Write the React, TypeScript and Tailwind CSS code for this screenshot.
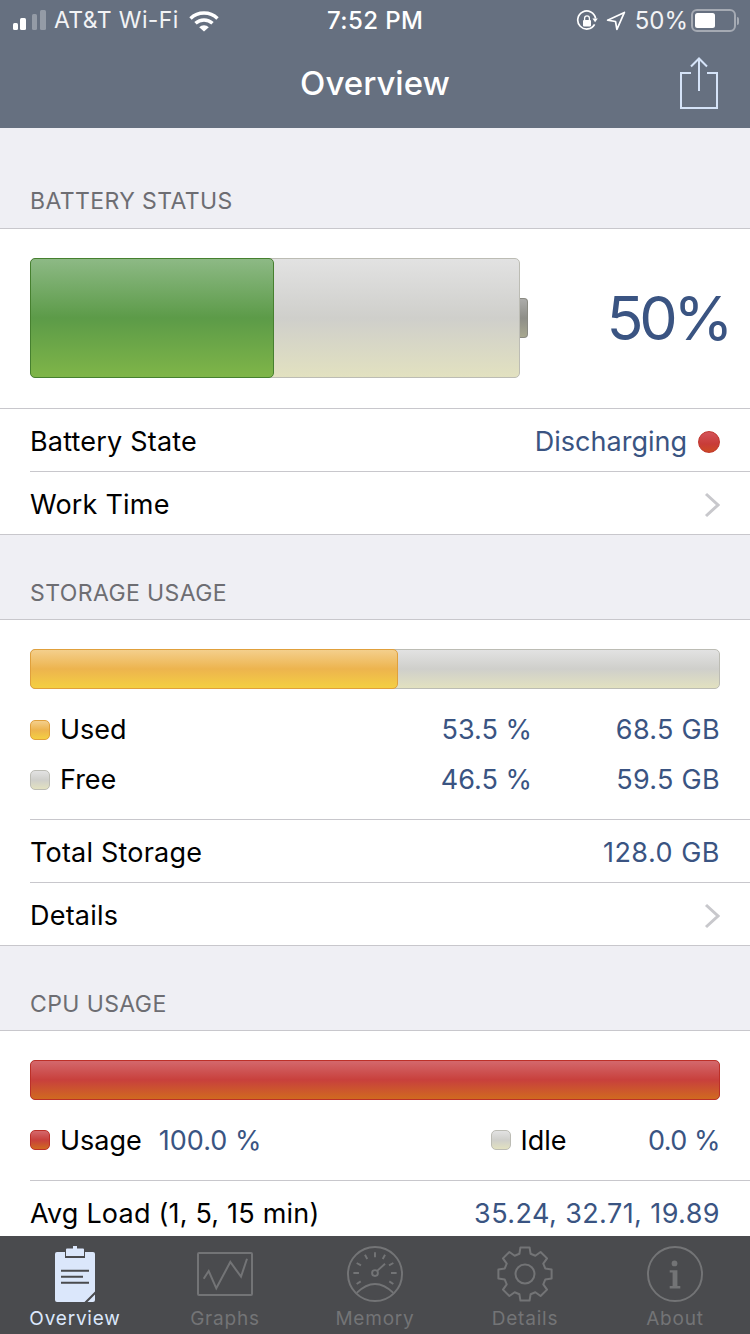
import React from "react";

const F = "font-['Inter','Liberation_Sans',sans-serif]";
const GREY = "bg-[linear-gradient(#e2e2e2_0%,#cfcfcb_50%,#e2e1c0_100%)] border border-[#bcbcb4]";
const ORANGE = "bg-[linear-gradient(#f4cf8c_0%,#edb44e_50%,#f4cf42_100%)] border border-[#e0a03c]";
const RED = "bg-[linear-gradient(#d4686c_0%,#c8403c_50%,#d06a20_100%)] border border-[#bc3028]";
const VAL = "text-[#3a5482]";

function Signal() {
  return (
    <svg width="34" height="24" viewBox="0 0 34 24" className="shrink-0">
      <rect x="0" y="14" width="5" height="7" rx="1.5" fill="#fff" />
      <rect x="7" y="9" width="6" height="12" rx="1.5" fill="#fff" />
      <rect x="19" y="5" width="5" height="16" rx="1.5" fill="#fff" fillOpacity="0.3" />
      <rect x="27" y="1" width="6" height="20" rx="1.5" fill="#fff" fillOpacity="0.3" />
    </svg>
  );
}

function Wifi() {
  return (
    <svg width="30" height="22" viewBox="0 0 30 22">
      <path d="M1.5 8.500a19.5 19.5 0 0 1 27 0" fill="none" stroke="#fff" strokeWidth="3.4" />
      <path d="M6.500 13.300a12.4 12.4 0 0 1 17 0" fill="none" stroke="#fff" strokeWidth="3.4" />
      <path d="M10.200 17.200a6.600 6.600 0 0 1 9.600 0L15 21.500z" fill="#fff" />
    </svg>
  );
}

function RotationLock() {
  return (
    <svg width="22" height="22" viewBox="0 0 22 22">
      <path d="M18.600 14.400A9 9 0 1 1 19.600 8.500" fill="none" stroke="#fff" strokeWidth="1.7" />
      <path d="M16.400 8.600h5.400l-2.700 3.600z" fill="#fff" />
      <rect x="7" y="10" width="8" height="6.400" rx="1" fill="#fff" />
      <path d="M8.600 10V8.200a2.400 2.400 0 0 1 4.800 0V10" fill="none" stroke="#fff" strokeWidth="1.3" />
    </svg>
  );
}

function Location() {
  return (
    <svg width="20" height="20" viewBox="0 0 20 20">
      <path d="M18.400 1.400 1.600 9.200l7.900 1.300 1.400 7.900z" fill="none" stroke="#fff" strokeWidth="1.7" strokeLinejoin="round" />
    </svg>
  );
}

function StatusBattery() {
  return (
    <div className="flex items-center">
      <div className="w-[45px] h-[23px] rounded-[6px] border-2 border-[#a5aab3] p-[2px]">
        <div className="w-[20px] h-full rounded-[2.5px] bg-white" />
      </div>
      <div className="ml-[1px] w-[2px] h-[8px] rounded-r bg-[#a5aab3]" />
    </div>
  );
}

function ShareIcon() {
  return (
    <svg width="40" height="54" viewBox="0 0 40 54" fill="none" stroke="#d5e3f8" strokeWidth="2">
      <path d="M12 16H2v35h36V16H28" />
      <path d="M20 2v32M12 9.500l8-8 8 8" />
    </svg>
  );
}

function Chevron() {
  return (
    <svg width="16" height="26" viewBox="0 0 16 26" fill="none" stroke="#c8c8cc" strokeWidth="3">
      <path d="M2 2 14 13 2 24" />
    </svg>
  );
}

function SectionHeader({ title, tall }: { title: string; tall?: boolean }) {
  return (
    <div className={`bg-[#efeff4] border-b border-[#c8c7cc] flex items-end pl-[30px] text-[#6d6d72] text-[23px] leading-[28px] tracking-[0.4px] ${tall ? "h-[101px] pb-[13px]" : "h-[85px] pb-[12px]"}`}>
      {title}
    </div>
  );
}

function Row({ label, children, last }: { label: string; children?: React.ReactNode; last?: boolean }) {
  return (
    <div className={`ml-[30px] pr-[30px] pt-[4px] flex items-center justify-between text-[27px] text-black ${last ? "h-[62px]" : "h-[63px] border-b border-[#c8c7cc]"}`}>
      <span className="tracking-[0.2px]">{label}</span>
      {children}
    </div>
  );
}

function Bar({ fill, width }: { fill: string; width: string }) {
  return (
    <div className={`relative mx-[30px] h-[40px] rounded-[5px] ${GREY}`}>
      <div className={`absolute -left-px -top-px -bottom-px rounded-[5px] ${fill} ${width}`} />
    </div>
  );
}

function Swatch({ cls }: { cls: string }) {
  return <div className={`w-[20px] h-[20px] rounded-[5px] shrink-0 ${cls}`} />;
}

function ClipboardIcon() {
  return (
    <svg width="40" height="56" viewBox="0 0 40 56">
      <path d="M2 6h8v6h20V6h8a2 2 0 0 1 2 2v37.500L29.500 56H2a2 2 0 0 1-2-2V8a2 2 0 0 1 2-2z" fill="#dbe7fb" />
      <path d="M32.500 56 40 48.500V54a2 2 0 0 1-2 2z" fill="#dbe7fb" />
      <path d="M12 2.500h6V0h4v2.500h6a1 1 0 0 1 1 1V10H11V3.500a1 1 0 0 1 1-1z" fill="#dbe7fb" />
      <path d="M6 24.700h28M6 30.700h22M6 36.700h28" stroke="#4a4b4e" strokeWidth="2" />
    </svg>
  );
}

function GraphIcon() {
  return (
    <svg width="56" height="44" viewBox="0 0 56 44" fill="none" stroke="#737476" strokeWidth="2">
      <rect x="1" y="1" width="54" height="42" rx="1" />
      <path d="M6.700 26.700 11.700 19l7.600 17.300L33.300 10 44 24.700 50 6.700" />
    </svg>
  );
}

function GaugeIcon() {
  return (
    <svg width="56" height="56" viewBox="0 0 58 58" fill="none" stroke="#737476" strokeWidth="2">
      <circle cx="29" cy="29" r="28" />
      <path d="M10 48.500Q29 30 48 48.500" />
      <circle cx="29" cy="28" r="3" />
      <path d="M31 26 39.400 18.300M29 6.600v5.100M18.600 9 21 13.500M10 17.600l4.500 2.400M6.600 28h5.800M10 39.400l4.200-2.800M39.400 9 37 13.500M48 17.600 43.500 20M51.400 28h-5.800M48 39.400l-4.200-2.800" />
    </svg>
  );
}

function gearPath() {
  const pts: string[] = [];
  for (let i = 0; i < 8; i++) {
    const a = (i * Math.PI) / 4 - Math.PI / 2;
    [[21, -0.27], [27, -0.17], [27, 0.17], [21, 0.27]].forEach(([r, d]) => {
      pts.push(`${(28 + r * Math.cos(a + d)).toFixed(2)} ${(28 + r * Math.sin(a + d)).toFixed(2)}`);
    });
  }
  return `M${pts.join("L")}Z`;
}

function GearIcon() {
  return (
    <svg width="56" height="56" viewBox="0 0 56 56" fill="none" stroke="#737476" strokeWidth="2" strokeLinejoin="round">
      <circle cx="28" cy="28" r="9.500" />
      <path d={gearPath()} />
    </svg>
  );
}

function InfoIcon() {
  return (
    <svg width="56" height="56" viewBox="0 0 58 58">
      <circle cx="29" cy="29" r="28" fill="none" stroke="#737476" strokeWidth="2" />
      <circle cx="28.500" cy="18" r="3" fill="#737476" />
      <path d="M23.500 25h8v16.500h3V44h-11v-2.500h3V27.500h-3z" fill="#737476" />
    </svg>
  );
}

const TABS: { label: string; icon: React.ReactNode; active?: boolean }[] = [
  { label: "Overview", icon: <ClipboardIcon />, active: true },
  { label: "Graphs", icon: <GraphIcon /> },
  { label: "Memory", icon: <GaugeIcon /> },
  { label: "Details", icon: <GearIcon /> },
  { label: "About", icon: <InfoIcon /> },
];

export default function App() {
  return (
    <div className={`${F} w-[750px] h-[1334px] flex flex-col overflow-hidden bg-white`}>
      <header className="h-[128px] shrink-0 bg-[#667080] text-white flex flex-col">
        <div className="relative h-[40px] pt-[1px] flex items-center pl-[13px] pr-[11px] text-[24px] justify-between">
          <div className="flex items-center gap-[7px]">
            <Signal />
            <span className="text-[23px] tracking-[0.4px] text-[#f2f3f5]">AT&amp;T Wi-Fi</span>
            <span className="ml-[3px]"><Wifi /></span>
          </div>
          <span className="absolute left-[327px] top-[7px] leading-[28px] font-medium tracking-[0.4px]">7:52 PM</span>
          <div className="flex items-center">
            <RotationLock />
            <span className="ml-[8px]"><Location /></span>
            <span className="ml-[9px] text-[#f2f3f5]">50%</span>
            <span className="ml-[3px]"><StatusBattery /></span>
          </div>
        </div>
        <div className="relative flex-1 flex items-center justify-center">
          <span className="text-[33px] font-medium -mt-[1px]">Overview</span>
          <div className="absolute right-[31px] top-[17px]">
            <ShareIcon />
          </div>
        </div>
      </header>

      <main className="flex-1 min-h-0 overflow-hidden">
        <SectionHeader title="BATTERY STATUS" tall />
        <div className="h-[179px] pt-[29px] flex items-start pr-[21px] pl-[30px]">
          <div className={`relative w-[490px] h-[120px] rounded-[5px] shrink-0 ${GREY}`}>
            <div className="absolute -left-px -top-px -bottom-px w-[244px] rounded-[5px] border border-[#46802f] bg-[linear-gradient(#8db985_0%,#5c9b48_50%,#7fb548_100%)]" />
          </div>
          <div className="mt-[40px] w-[8px] h-[40px] rounded-r-[4px] border border-l-0 border-[#8a8a82] bg-[linear-gradient(#acacaa,#8e8e88_50%,#a8a890)]" />
          <span className={`ml-auto mt-[24px] text-[61px] leading-[72px] tracking-[-4.3px] ${VAL}`}>50%</span>
        </div>
        <div className="border-t border-[#c8c7cc]" />
        <Row label="Battery State">
          <span className={`flex items-center gap-[11px] ${VAL}`}>
            Discharging
            <span className="w-[22px] h-[22px] rounded-full border border-[#c0362c] bg-[linear-gradient(#d4535a,#c83c38_60%,#cc4a24)]" />
          </span>
        </Row>
        <Row label="Work Time" last>
          <Chevron />
        </Row>
        <div className="border-t border-[#c8c7cc]" />

        <SectionHeader title="STORAGE USAGE" />
        <div className="pt-[29px]">
          <Bar fill={ORANGE} width="w-[368px]" />
        </div>
        <div className="h-[131px] pt-[16px] border-b border-[#c8c7cc] ml-[30px] pr-[30px] text-[27px]">
          <div className="h-[50px] flex items-center">
            <Swatch cls={ORANGE} />
            <span className="ml-[10px] text-black">Used</span>
            <span className={`ml-auto ${VAL}`}>53.5 %</span>
            <span className={`w-[188px] text-right tracking-[0.3px] ${VAL}`}>68.5 GB</span>
          </div>
          <div className="h-[50px] flex items-center">
            <Swatch cls={GREY} />
            <span className="ml-[10px] text-black">Free</span>
            <span className={`ml-auto ${VAL}`}>46.5 %</span>
            <span className={`w-[188px] text-right tracking-[0.3px] ${VAL}`}>59.5 GB</span>
          </div>
        </div>
        <Row label="Total Storage">
          <span className={`tracking-[0.5px] ${VAL}`}>128.0 GB</span>
        </Row>
        <Row label="Details" last>
          <Chevron />
        </Row>
        <div className="border-t border-[#c8c7cc]" />

        <SectionHeader title="CPU USAGE" />
        <div className="pt-[29px]">
          <Bar fill={RED} width="w-[690px]" />
        </div>
        <div className="h-[81px] border-b border-[#c8c7cc] ml-[30px] pr-[30px] text-[27px] flex items-center">
          <Swatch cls={RED} />
          <span className="ml-[10px] pt-[2px] text-black">Usage</span>
          <span className={`ml-[17px] pt-[2px] ${VAL}`}>100.0 %</span>
          <span className="ml-[230px]"><Swatch cls={GREY} /></span>
          <span className="ml-[9px] pt-[2px] text-black">Idle</span>
          <span className={`ml-auto pt-[2px] tracking-[-0.5px] ${VAL}`}>0.0 %</span>
        </div>
        <Row label="Avg Load (1, 5, 15 min)" last>
          <span className={`tracking-[0.42px] ${VAL}`}>35.24, 32.71, 19.89</span>
        </Row>
      </main>

      <nav className="h-[98px] shrink-0 bg-[#4a4b4e] flex">
        {TABS.map((t) => (
          <div key={t.label} className="w-[150px] pt-[10px] flex flex-col items-center">
            <div className="h-[56px] flex items-center justify-center">{t.icon}</div>
            <span className={`mt-[5px] text-[19px] leading-[24px] tracking-[0.8px] ${t.active ? "text-[#dbe7fb]" : "text-[#737476]"}`}>{t.label}</span>
          </div>
        ))}
      </nav>
    </div>
  );
}
